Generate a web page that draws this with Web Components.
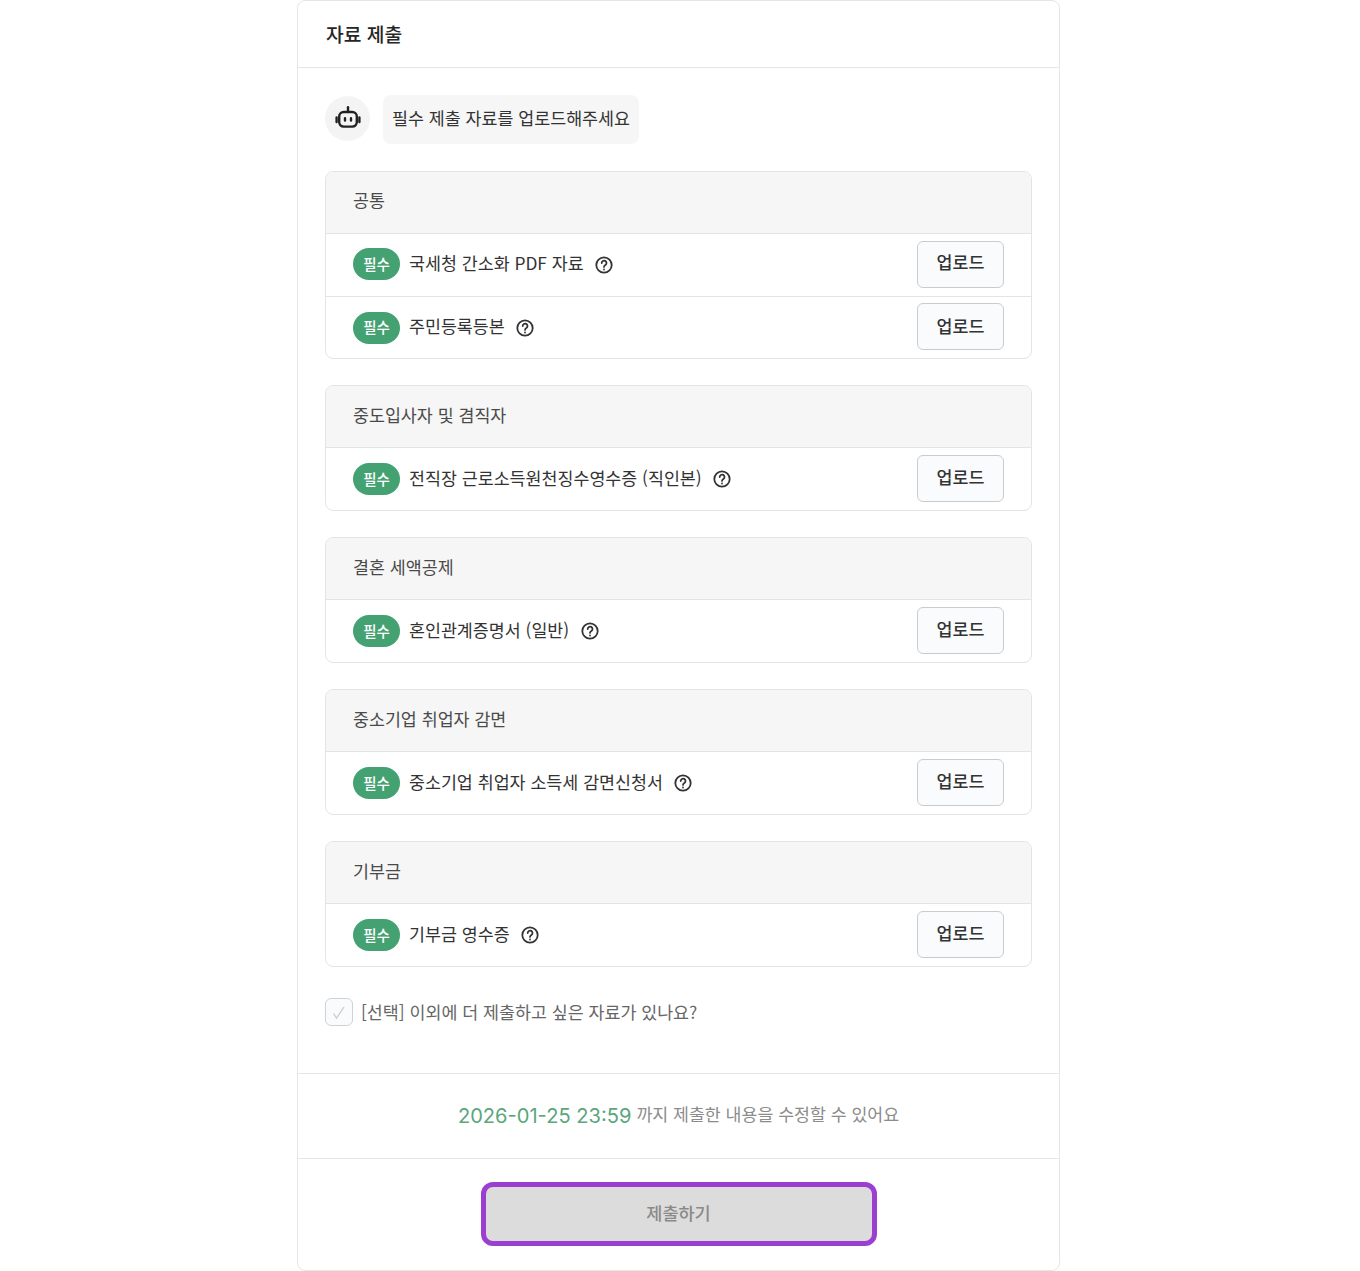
<!DOCTYPE html>
<html lang="ko">
<head>
<meta charset="utf-8">
<title>자료 제출</title>
<style>
  html, body { margin: 0; padding: 0; background: #fff; }
  body { font-family: "Noto Sans CJK KR", "Noto Sans", sans-serif; }
</style>
</head>
<body>

<submit-panel>
  <bot-message slot="intro">필수 제출 자료를 업로드해주세요</bot-message>

  <doc-group title="공통">
    <doc-row>국세청 간소화 PDF 자료</doc-row>
    <doc-row>주민등록등본</doc-row>
  </doc-group>
  <doc-group title="중도입사자 및 겸직자">
    <doc-row>전직장 근로소득원천징수영수증 (직인본)</doc-row>
  </doc-group>
  <doc-group title="결혼 세액공제">
    <doc-row>혼인관계증명서 (일반)</doc-row>
  </doc-group>
  <doc-group title="중소기업 취업자 감면">
    <doc-row>중소기업 취업자 소득세 감면신청서</doc-row>
  </doc-group>
  <doc-group title="기부금">
    <doc-row>기부금 영수증</doc-row>
  </doc-group>

  <option-check slot="option">[선택] 이외에 더 제출하고 싶은 자료가 있나요?</option-check>
</submit-panel>

<script>
class SubmitPanel extends HTMLElement {
    constructor() {
        super();
        this.attachShadow({ mode: "open" });
    }

    connectedCallback() {
        this.shadowRoot.innerHTML = `
      <style>
        :host{
            display:block;
            box-sizing:border-box;
            width:763px;
            height:1271px;
            margin-left:297px;
            background:#fff;
            border:1px solid #e6e6e6;
            border-radius:8px;
            color:#2b2b2b;
        }

        header{
            box-sizing:border-box;
            height:67px;
            padding:0 28px 1px;
            display:flex;
            align-items:center;
            border-bottom:1px solid #e6e6e6;
            font-size:19.25px;
            font-weight:500;
            color:#262626;
        }

        .body{
            box-sizing:border-box;
            height:1006px;
            padding:27px 27px 0;
            border-bottom:1px solid #e6e6e6;
            display:flex;
            flex-direction:column;
        }

        .groups{
            display:flex;
            flex-direction:column;
            gap:26px;
            margin-top:27px;
        }

        .option{
            margin-top:31px;
        }

        .deadline{
            box-sizing:border-box;
            height:85px;
            display:flex;
            align-items:center;
            justify-content:center;
            gap:5px;
            border-bottom:1px solid #e6e6e6;
            font-size:17.3px;
            color:#8c8c8c;
        }

        .deadline b{
            font-family:"Inter","Noto Sans",sans-serif;
            font-weight:400;
            font-size:20.1px;
            color:#5ba67d;
        }

        .deadline span{
            padding-bottom:6px;
        }

        footer{
            display:flex;
            justify-content:center;
            padding-top:23px;
        }

        button{
            box-sizing:border-box;
            width:396px;
            height:64px;
            padding:0 0 4px;
            background:#dcdcdc;
            border:5px solid #9b3fd0;
            border-radius:12px;
            font:500 17.5px "Noto Sans CJK KR","Noto Sans",sans-serif;
            color:#8a8a8a;
        }
      </style>

      <header>자료 제출</header>

      <div class="body">
        <slot name="intro"></slot>
        <div class="groups"><slot></slot></div>
        <div class="option"><slot name="option"></slot></div>
      </div>

      <div class="deadline"><b>2026-01-25 23:59</b><span>까지 제출한 내용을 수정할 수 있어요</span></div>

      <footer><button type="button">제출하기</button></footer>
    `;
    }
}

class BotMessage extends HTMLElement {
    constructor() {
        super();
        this.attachShadow({ mode: "open" });
    }

    connectedCallback() {
        this.shadowRoot.innerHTML = `
      <style>
        :host{
            display:flex;
            align-items:center;
            gap:13px;
        }

        .avatar{
            width:45px;
            height:45px;
            margin-bottom:2px;
            border-radius:50%;
            background:#f4f4f4;
            display:flex;
            align-items:center;
            justify-content:center;
        }

        .bubble{
            box-sizing:border-box;
            height:49px;
            padding:0 9px 4px;
            display:flex;
            align-items:center;
            background:#f6f6f6;
            border-radius:8px;
            font-size:17.35px;
            color:#333;
        }
      </style>

      <div class="avatar">
        <svg width="26" height="26" viewBox="0 0 26 26" fill="none" stroke="#222" stroke-width="2.4" stroke-linecap="round">
          <path d="M13 1.2v4"/>
          <rect x="4.2" y="6" width="17.6" height="14.6" rx="4.5"/>
          <path d="M1.6 11.5v4.5M24.4 11.5v4.5"/>
          <path d="M10 12.2v2.4M16 12.2v2.4"/>
        </svg>
      </div>
      <div class="bubble"><slot></slot></div>
    `;
    }
}

class DocGroup extends HTMLElement {
    constructor() {
        super();
        this.attachShadow({ mode: "open" });
    }

    connectedCallback() {
        const title = this.getAttribute("title") ?? "";

        this.shadowRoot.innerHTML = `
      <style>
        :host{
            display:block;
            border:1px solid #e4e4e4;
            border-radius:8px;
            overflow:hidden;
        }

        :host(:not(:first-of-type)){
            --nudge:1px;
        }

        .title{
            box-sizing:border-box;
            height:61px;
            padding:0 27px calc(6px - 2 * var(--nudge, 0px));
            display:flex;
            align-items:center;
            background:#f6f6f6;
            font-size:17.35px;
            color:#4a4a4a;
        }
      </style>

      <div class="title">${title}</div>
      <slot></slot>
    `;
    }
}

class DocRow extends HTMLElement {
    constructor() {
        super();
        this.attachShadow({ mode: "open" });
    }

    connectedCallback() {
        this.shadowRoot.innerHTML = `
      <style>
        :host{
            display:flex;
            box-sizing:border-box;
            height:63px;
            padding:0 27px 2px;
            align-items:center;
            border-top:1px solid #e4e4e4;
            font-size:17.35px;
            color:#333;
        }

        :host(:not(:first-child)){
            height:62px;
            --nudge:1px;
        }

        .badge{
            box-sizing:border-box;
            width:47px;
            height:32px;
            padding-bottom:2px;
            border-radius:16px;
            background:#44a272;
            color:#fff;
            font-size:14.5px;
            font-weight:500;
            display:flex;
            align-items:center;
            justify-content:center;
            margin:calc(2 * var(--nudge, 0px)) 9px 0 0;
            flex:none;
        }

        .label{
            padding-bottom:calc(4px - 2 * var(--nudge, 0px));
        }

        svg{
            margin:2px 0 0 10.5px;
            flex:none;
        }

        button{
            box-sizing:border-box;
            margin-left:auto;
            width:87px;
            height:47px;
            background:#fafbfc;
            border:1px solid #c9cccf;
            border-radius:6px;
            font:500 17.35px "Noto Sans CJK KR","Noto Sans",sans-serif;
            color:#333;
            padding:0 0 calc(5px - 2 * var(--nudge, 0px));
        }
      </style>

      <span class="badge">필수</span>
      <span class="label"><slot></slot></span>
      <svg width="20" height="20" viewBox="0 0 20 20" fill="none" stroke="#333" stroke-width="1.8" stroke-linecap="round">
        <circle cx="10" cy="10" r="7.7"/>
        <path d="M7.7 8a2.4 2.4 0 1 1 3.7 2c-.9.6-1.4 1-1.4 1.9"/>
        <path d="M10 14.4v.1"/>
      </svg>
      <button type="button">업로드</button>
    `;
    }
}

class OptionCheck extends HTMLElement {
    constructor() {
        super();
        this.attachShadow({ mode: "open" });
    }

    connectedCallback() {
        this.shadowRoot.innerHTML = `
      <style>
        :host{
            display:flex;
            align-items:center;
            gap:8px;
            font-size:17.35px;
            color:#666;
        }

        .box{
            box-sizing:border-box;
            width:28px;
            height:28px;
            border:1px solid #cfd2d5;
            border-radius:6px;
            background:#fafbfc;
            display:flex;
            align-items:center;
            justify-content:center;
        }

        .text{
            padding-bottom:2px;
        }
      </style>

      <span class="box">
        <svg width="16" height="18" viewBox="0 0 16 18" fill="none" stroke="#c8cbce" stroke-width="1.3">
          <path d="M2.5 10.5l3 4.5L13 4"/>
        </svg>
      </span>
      <span class="text"><slot></slot></span>
    `;
    }
}

customElements.define("submit-panel", SubmitPanel);
customElements.define("bot-message", BotMessage);
customElements.define("doc-group", DocGroup);
customElements.define("doc-row", DocRow);
customElements.define("option-check", OptionCheck);
</script>
</body>
</html>
